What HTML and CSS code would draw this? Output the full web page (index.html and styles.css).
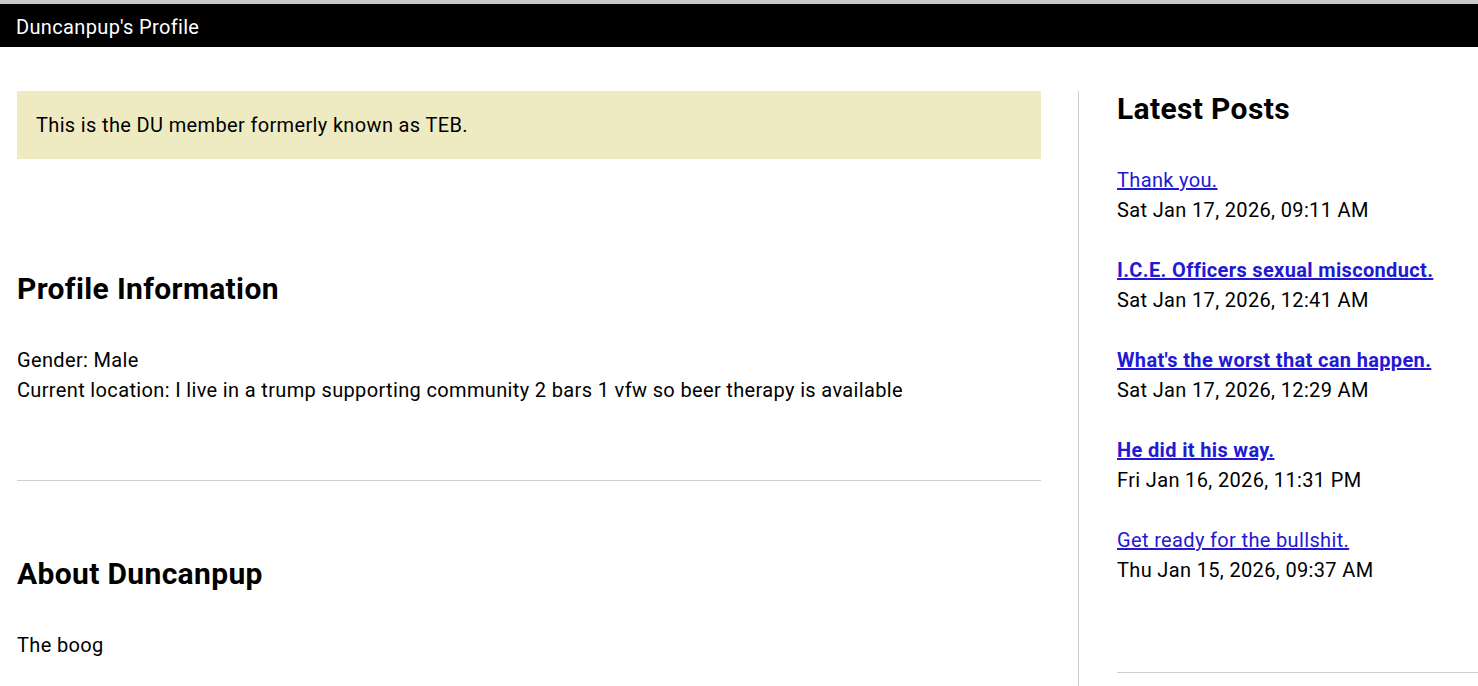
FILE: index.html
```html
<!DOCTYPE html>
<html>
<head>
<meta charset="utf-8">
<title>Duncanpup's Profile</title>
<link rel="stylesheet" href="styles.css">
</head>
<body>
<header class="topbar">Duncanpup's Profile</header>
<main class="layout">
  <section class="main-col">
    <div class="notice">This is the DU member formerly known as TEB.</div>
    <h2 class="heading">Profile Information</h2>
    <div class="info">
      <div>Gender: Male</div>
      <div>Current location: I live in a trump supporting community 2 bars 1 vfw so beer therapy is available</div>
    </div>
    <hr class="rule">
    <h2 class="heading">About Duncanpup</h2>
    <div class="info">The boog</div>
  </section>
  <aside class="side-col">
    <h2 class="heading side-heading">Latest Posts</h2>
    <ul class="posts">
      <li class="post"><a href="#">Thank you.</a><div class="date">Sat Jan 17, 2026, 09:11 AM</div></li>
      <li class="post"><a href="#" class="hot">I.C.E. Officers sexual misconduct.</a><div class="date">Sat Jan 17, 2026, 12:41 AM</div></li>
      <li class="post"><a href="#" class="hot">What's the worst that can happen.</a><div class="date">Sat Jan 17, 2026, 12:29 AM</div></li>
      <li class="post"><a href="#" class="hot">He did it his way.</a><div class="date">Fri Jan 16, 2026, 11:31 PM</div></li>
      <li class="post"><a href="#">Get ready for the bullshit.</a><div class="date">Thu Jan 15, 2026, 09:37 AM</div></li>
    </ul>
    <hr class="side-rule">
  </aside>
</main>
</body>
</html>
```

FILE: styles.css
```css
html, body {
  margin: 0;
  padding: 0;
  background: #fff;
  color: #000;
  font-family: Roboto, "Liberation Sans", Arial, sans-serif;
  font-size: 20px;
  line-height: 30px;
  letter-spacing: 0.35px;
}

.topbar {
  border-top: 4px solid #c8c8c8;
  background: #000;
  color: #fff;
  height: 41px;
  line-height: 43px;
  padding-top: 2px;
  padding-left: 16px;
  font-size: 20px;
}

.layout {
  display: flex;
  padding: 44px 0 0 17px;
}

.main-col {
  width: 1024px;
  flex: none;
  margin-right: 37px;
}

.notice {
  background: #eeebc3;
  padding: 19px 19px;
  margin-bottom: 112px;
}

.heading {
  font-size: 30px;
  font-weight: 700;
  line-height: 36px;
  margin: 0 0 38px;
}

.info {
  margin: 0;
}

.rule {
  border: 0;
  border-top: 1px solid #cfcfcf;
  margin: 75px 0 75px;
  height: 0;
}

.side-col {
  flex: 1;
  border-left: 1px solid #cfcfcf;
  padding-left: 38px;
  min-height: 600px;
}

.side-heading {
  margin-bottom: 38px;
}

.posts {
  list-style: none;
  margin: 0;
  padding: 0;
}

.post {
  margin-bottom: 30px;
}

.post a {
  color: #2318d3;
  text-decoration: underline;
}

.post a.hot {
  font-weight: 700;
}

.side-rule {
  border: 0;
  border-top: 1px solid #cfcfcf;
  margin: 87px 0 0;
  height: 0;
}
```
